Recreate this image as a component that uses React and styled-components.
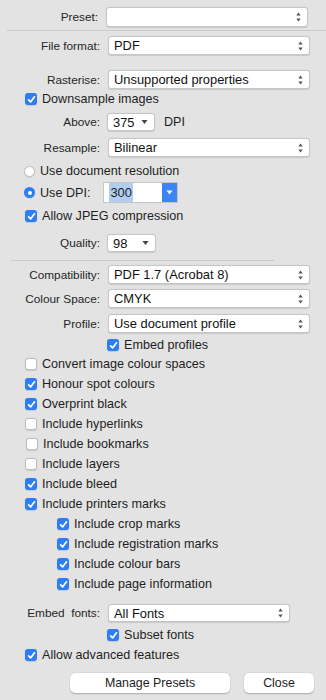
import styled, { createGlobalStyle } from 'styled-components';

const Global = createGlobalStyle`
	html, body {
		margin: 0;
		padding: 0;
		background: #e3e3e3;
	}
	body {
		font-family: "Liberation Sans", Arial, sans-serif;
		font-size: 12.6px;
		color: #1e1e1e;
	}
`;

const Panel = styled.div`
	width: 326px;
	height: 700px;
	display: flex;
	flex-direction: column;
	background: #e3e3e3;
`;

const FieldRow = styled.div`
	display: grid;
	grid-template-columns: ${(p) => p.$label || 100}px auto;
	column-gap: ${(p) => p.$gap || 8}px;
	align-items: center;
	height: ${(p) => p.$h || 19}px;
	margin-top: ${(p) => p.$top || 0}px;
	padding-right: ${(p) => p.$right || 16}px;
`;

const Label = styled.span`
	text-align: right;
	white-space: pre;
	font-size: 11.8px;
	color: #262626;
`;

const Separator = styled.div`
	height: 1px;
	background: #c9c9c9;
	margin-top: ${(p) => p.$top}px;
	margin-left: ${(p) => p.$left}px;
	margin-right: ${(p) => p.$right}px;
`;

const SelectBox = styled.div`
	position: relative;
	box-sizing: border-box;
	height: ${(p) => p.$h || 19}px;
	width: ${(p) => (p.$w ? `${p.$w}px` : 'auto')};
	background: #fff;
	border: 1px solid #c6c6c6;
	border-radius: 3px;
	box-shadow: 0 0.5px 1px rgba(0, 0, 0, 0.12);
	display: flex;
	align-items: center;
	padding-left: 5px;
	font-size: 12.9px;
	color: #111;
`;

const Arrows = styled.svg`
	position: absolute;
	right: 6px;
	top: 50%;
	transform: translateY(-50%);
`;

function Select({ value, w, h, single }) {
	return (
		<SelectBox $w={w} $h={h}>
			{value}
			{single ? (
				<Arrows width="7" height="5" viewBox="0 0 7 5">
					<path d="M0.5 0.5 L6.5 0.5 L3.5 4.5 Z" fill="#444" />
				</Arrows>
			) : (
				<Arrows width="5" height="10" viewBox="0 0 5 10">
					<path d="M0.3 3.6 L4.7 3.6 L2.5 0.6 Z" fill="#555" />
					<path d="M0.3 6.4 L4.7 6.4 L2.5 9.4 Z" fill="#555" />
				</Arrows>
			)}
		</SelectBox>
	);
}

const CheckRow = styled.label`
	display: flex;
	align-items: center;
	gap: 5px;
	height: ${(p) => p.$h || 20}px;
	margin-top: ${(p) => p.$top || 0}px;
	padding-left: ${(p) => p.$indent}px;
	font-size: 12.6px;
	color: #1e1e1e;
`;

const Box = styled.span`
	box-sizing: border-box;
	width: 12px;
	height: 12px;
	border-radius: 3px;
	display: flex;
	align-items: center;
	justify-content: center;
	background: ${(p) => (p.$on ? '#2f7df6' : '#fff')};
	border: ${(p) => (p.$on ? 'none' : '1px solid #bdbdbd')};
	box-shadow: 0 0.5px 1px rgba(0, 0, 0, 0.12);
`;

function Check({ on, children, indent = 25, top, h }) {
	return (
		<CheckRow $indent={indent} $top={top} $h={h}>
			<Box $on={on}>
				{on && (
					<svg width="9" height="9" viewBox="0 0 9 9">
						<path d="M1.6 4.8 L3.6 6.9 L7.5 1.8" stroke="#fff" strokeWidth="1.7" fill="none" strokeLinecap="round" strokeLinejoin="round" />
					</svg>
				)}
			</Box>
			{children}
		</CheckRow>
	);
}

const Radio = styled.span`
	box-sizing: border-box;
	width: 11px;
	height: 11px;
	border-radius: 50%;
	background: ${(p) => (p.$on ? '#2f7df6' : '#fff')};
	border: ${(p) => (p.$on ? 'none' : '1px solid #bdbdbd')};
	display: flex;
	align-items: center;
	justify-content: center;
	box-shadow: 0 0.5px 1px rgba(0, 0, 0, 0.12);
	&::after {
		content: '';
		display: ${(p) => (p.$on ? 'block' : 'none')};
		width: 4px;
		height: 4px;
		border-radius: 50%;
		background: #fff;
	}
`;

const RadioRow = styled.div`
	display: flex;
	align-items: center;
	gap: 5px;
	height: ${(p) => p.$h || 16}px;
	margin-top: ${(p) => p.$top || 0}px;
	padding-left: 24px;
	font-size: 12.6px;
`;

const DpiField = styled.div`
	box-sizing: border-box;
	margin-left: 8px;
	width: 75px;
	height: 21px;
	background: #fff;
	border: 1px solid #c6c6c6;
	display: flex;
	align-items: stretch;
	font-size: 12.9px;
`;

const DpiText = styled.div`
	flex: 1;
	display: flex;
	align-items: center;
	padding-left: 5px;
	& > span {
		background: #b1cdf0;
		padding: 2px 1px;
	}
`;

const DpiButton = styled.div`
	width: 15px;
	background: #3d84f4;
	display: flex;
	align-items: center;
	justify-content: center;
`;

const Inline = styled.div`
	display: flex;
	align-items: center;
	gap: 9px;
	font-size: 12.6px;
`;

const ButtonBar = styled.div`
	display: flex;
	gap: 14px;
	margin-top: ${(p) => p.$top}px;
	padding-left: 70px;
`;

const Button = styled.div`
	box-sizing: border-box;
	width: ${(p) => p.$w}px;
	height: 20px;
	background: #fff;
	border-radius: 5px;
	box-shadow: 0 0.5px 1.5px rgba(0, 0, 0, 0.25);
	display: flex;
	align-items: center;
	justify-content: center;
	font-size: 12.4px;
	color: #1e1e1e;
`;

export default function App() {
	return (
		<>
			<Global />
			<Panel>
				<FieldRow $label={98} $top={7} $h={20} $right={18}>
					<Label>Preset:</Label>
					<Select value="" h={20} />
				</FieldRow>
				<Separator $top={3} $left={7} $right={0} />

				<FieldRow $top={5}>
					<Label>File format:</Label>
					<Select value="PDF" />
				</FieldRow>
				<FieldRow $top={15}>
					<Label>Rasterise:</Label>
					<Select value="Unsupported properties" />
				</FieldRow>
				<Check on top={2} h={16}>Downsample images</Check>

				<FieldRow $top={6} $h={18} $gap={7}>
					<Label>Above:</Label>
					<Inline>
						<Select value="375" w={48} h={18} single />
						<span>DPI</span>
					</Inline>
				</FieldRow>
				<FieldRow $top={7}>
					<Label>Resample:</Label>
					<Select value="Bilinear" />
				</FieldRow>

				<RadioRow $top={6}>
					<Radio />
					Use document resolution
				</RadioRow>
				<RadioRow $top={3} $h={21}>
					<Radio $on />
					Use DPI:
					<DpiField>
						<DpiText>
							<span>300</span>
						</DpiText>
						<DpiButton>
							<svg width="7" height="5" viewBox="0 0 7 5">
								<path d="M0.5 0.5 L6.5 0.5 L3.5 4.5 Z" fill="#fff" />
							</svg>
						</DpiButton>
					</DpiField>
				</RadioRow>
				<Check on top={5} h={16}>Allow JPEG compression</Check>

				<FieldRow $top={10} $h={18} $gap={7}>
					<Label>Quality:</Label>
					<Inline>
						<Select value="98" w={49} h={18} single />
					</Inline>
				</FieldRow>
				<Separator $top={8} $left={11} $right={52} />

				<FieldRow $top={4}>
					<Label>Compatibility:</Label>
					<Select value="PDF 1.7 (Acrobat 8)" />
				</FieldRow>
				<FieldRow $top={5}>
					<Label>Colour Space:</Label>
					<Select value="CMYK" />
				</FieldRow>
				<FieldRow $top={6}>
					<Label>Profile:</Label>
					<Select value="Use document profile" />
				</FieldRow>
				<Check on indent={107} top={4} h={16}>Embed profiles</Check>

				<Check top={1}>Convert image colour spaces</Check>
				<Check on>Honour spot colours</Check>
				<Check on>Overprint black</Check>
				<Check>Include hyperlinks</Check>
				<Check indent={26}>Include bookmarks</Check>
				<Check>Include layers</Check>
				<Check on>Include bleed</Check>
				<Check on>Include printers marks</Check>
				<Check on indent={57}>Include crop marks</Check>
				<Check on indent={57}>Include registration marks</Check>
				<Check on indent={57}>Include colour bars</Check>
				<Check on indent={57}>Include page information</Check>

				<FieldRow $top={10} $h={18} $right={36}>
					<Label>{'Embed  fonts:'}</Label>
					<Select value="All Fonts" h={18} />
				</FieldRow>
				<Check on indent={107} top={3}>Subset fonts</Check>
				<Check on>Allow advanced features</Check>

				<ButtonBar $top={8}>
					<Button $w={160}>Manage Presets</Button>
					<Button $w={70}>Close</Button>
				</ButtonBar>
			</Panel>
		</>
	);
}
